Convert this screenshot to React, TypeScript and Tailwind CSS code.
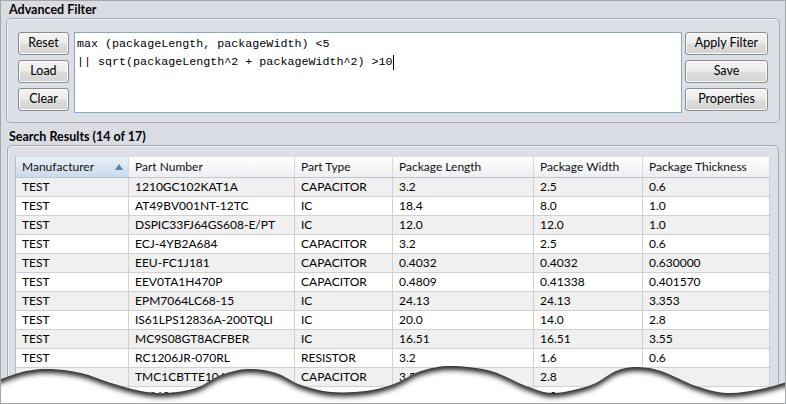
import React from "react";

const cols = [
  { name: "Manufacturer", w: "w-[113px]" },
  { name: "Part Number", w: "w-[166px]" },
  { name: "Part Type", w: "w-[98px]" },
  { name: "Package Length", w: "w-[141px]" },
  { name: "Package Width", w: "w-[109px]" },
  { name: "Package Thickness", w: "w-[127px]" },
];

const rows = [
  ["TEST", "1210GC102KAT1A", "CAPACITOR", "3.2", "2.5", "0.6"],
  ["TEST", "AT49BV001NT-12TC", "IC", "18.4", "8.0", "1.0"],
  ["TEST", "DSPIC33FJ64GS608-E/PT", "IC", "12.0", "12.0", "1.0"],
  ["TEST", "ECJ-4YB2A684", "CAPACITOR", "3.2", "2.5", "0.6"],
  ["TEST", "EEU-FC1J181", "CAPACITOR", "0.4032", "0.4032", "0.630000"],
  ["TEST", "EEV0TA1H470P", "CAPACITOR", "0.4809", "0.41338", "0.401570"],
  ["TEST", "EPM7064LC68-15", "IC", "24.13", "24.13", "3.353"],
  ["TEST", "IS61LPS12836A-200TQLI", "IC", "20.0", "14.0", "2.8"],
  ["TEST", "MC9S08GT8ACFBER", "IC", "16.51", "16.51", "3.55"],
  ["TEST", "RC1206JR-070RL", "RESISTOR", "3.2", "1.6", "0.6"],
  ["TEST", "TMC1CBTTE106M", "CAPACITOR", "3.5", "2.8", "1.9"],
  ["TEST", "TPS62110RSAR", "IC", "4.0", "4.0", "0.9"],
];

const wavePts: [number, number][] = [
  [-10, 382], [0, 378], [25, 370], [50, 368], [80, 372], [110, 382], [140, 390],
  [165, 392], [195, 387], [220, 374], [247, 368], [275, 372], [300, 384],
  [330, 391], [365, 390], [393, 383], [420, 370], [450, 365], [490, 370],
  [525, 385], [553, 392], [590, 384], [615, 370], [635, 366], [660, 370],
  [695, 385], [726, 392], [760, 388], [796, 378],
];

function edgePath(pts: [number, number][]) {
  let d = `M${pts[0][0]},${pts[0][1]}`;
  for (let i = 0; i < pts.length - 1; i++) {
    const p0 = pts[i - 1] || pts[i];
    const p1 = pts[i];
    const p2 = pts[i + 1];
    const p3 = pts[i + 2] || p2;
    const c1x = p1[0] + (p2[0] - p0[0]) / 6;
    const c1y = p1[1] + (p2[1] - p0[1]) / 6;
    const c2x = p2[0] - (p3[0] - p1[0]) / 6;
    const c2y = p2[1] - (p3[1] - p1[1]) / 6;
    d += ` C${c1x.toFixed(1)},${c1y.toFixed(1)} ${c2x.toFixed(1)},${c2y.toFixed(1)} ${p2[0]},${p2[1]}`;
  }
  return d;
}

function Btn({ label, w }: { label: string; w: string }) {
  return (
    <div
      className={`${w} h-[23px] flex items-center justify-center rounded-[3px] border border-[#8a8c8e] bg-[linear-gradient(#f4f4f4_0%,#ececec_48%,#dedede_52%,#d2d2d2_100%)] shadow-[inset_0_0_0_1px_#fbfbfb] text-[12.5px] text-black leading-none`}
    >
      {label}
    </div>
  );
}

function Wave() {
  const edge = edgePath(wavePts);
  const below = `${edge} L796,420 L-10,420 Z`;
  const above = `${edge} L796,300 L-10,300 Z`;
  return (
    <svg
      className="absolute left-0 top-0 pointer-events-none"
      width="786"
      height="404"
      viewBox="0 0 786 404"
    >
      <defs>
        <clipPath id="belowClip">
          <path d={below} />
        </clipPath>
        <filter id="blurS" x="-5%" y="-20%" width="110%" height="140%">
          <feGaussianBlur stdDeviation="2.4" />
        </filter>
      </defs>
      <path d={below} fill="#ffffff" />
      <g clipPath="url(#belowClip)">
        <path d={above} transform="translate(0,4)" fill="#2a2a2a" filter="url(#blurS)" />
      </g>
    </svg>
  );
}

export default function App() {
  return (
    <div className="relative w-[786px] h-[404px] overflow-hidden bg-[#d9dce3] border border-[#a3a6ab] font-['Lato',sans-serif] text-[12px] text-black flex flex-col">
      <div className="h-[17px] pl-[8px] leading-[17px] font-bold text-[12.5px]">Advanced Filter</div>

      <div className="ml-[5px] mr-[5px] rounded-[5px] border border-[#a7abb2] bg-[#dcdfe5] shadow-[inset_1px_1px_0_#eef0f3] flex items-start pt-[13px] pb-[9px] pl-[11px] pr-[11px]">
        <div className="flex flex-col gap-[5px]">
          <Btn label="Reset" w="w-[51px]" />
          <Btn label="Load" w="w-[51px]" />
          <Btn label="Clear" w="w-[51px]" />
        </div>
        <div className="ml-[5px] flex-1 h-[81px] border border-[#8aa7c8] bg-white pl-[2px] pt-[2px] font-['Liberation_Mono',monospace] text-[11.7px] leading-[18px] whitespace-pre text-black">
          <div>max (packageLength, packageWidth) &lt;5</div>
          <div className="flex items-center">
            <span>|| sqrt(packageLength^2 + packageWidth^2) &gt;10</span>
            <span className="inline-block w-px h-[15px] bg-black" />
          </div>
        </div>
        <div className="ml-[3px] flex flex-col gap-[5px]">
          <Btn label="Apply Filter" w="w-[83px]" />
          <Btn label="Save" w="w-[83px]" />
          <Btn label="Properties" w="w-[83px]" />
        </div>
      </div>

      <div className="mt-[5px] h-[17px] pl-[8px] leading-[17px] font-bold text-[12.5px]">Search Results (14 of 17)</div>

      <div className="ml-[6px] mr-[6px] flex-1 rounded-t-[5px] border border-[#a7abb2] bg-[#dcdfe5] shadow-[inset_1px_1px_0_#eef0f3] pt-[11px] pl-[7px] pr-[7px] overflow-hidden">
        <div className="w-[755px] border-l border-r border-[#b9bcc1] bg-white">
          <div className="flex h-[21px] border-b border-[#c3c6cb] bg-[linear-gradient(#ffffff_0%,#f7f8f9_45%,#eceef1_100%)]">
            {cols.map((c, i) => (
              <div
                key={c.name}
                className={`${c.w} shrink-0 flex items-center justify-between pl-[6px] pr-[4px] border-r border-[#d5d7db] text-[#111] ${
                  i === 0 ? "bg-[linear-gradient(#e8eff7_0%,#dce7f3_45%,#c9daec_100%)]" : ""
                }`}
              >
                <span>{c.name}</span>
                {i === 0 && (
                  <svg width="8" height="6" viewBox="0 0 8 6" className="mr-[1px]">
                    <path d="M4 0 L8 6 L0 6 Z" fill="#5a80ab" />
                  </svg>
                )}
              </div>
            ))}
          </div>
          {rows.map((r, ri) => (
            <div
              key={ri}
              className={`flex h-[19px] border-b border-[#d0d0d0] ${ri % 2 === 0 ? "bg-[#f0f0f0]" : "bg-white"}`}
            >
              {r.map((v, ci) => (
                <div
                  key={ci}
                  className={`${cols[ci].w} shrink-0 flex items-center pl-[6px] border-r border-[#d0d0d0] whitespace-nowrap overflow-hidden`}
                >
                  {v}
                </div>
              ))}
            </div>
          ))}
        </div>
      </div>

      <Wave />
    </div>
  );
}
